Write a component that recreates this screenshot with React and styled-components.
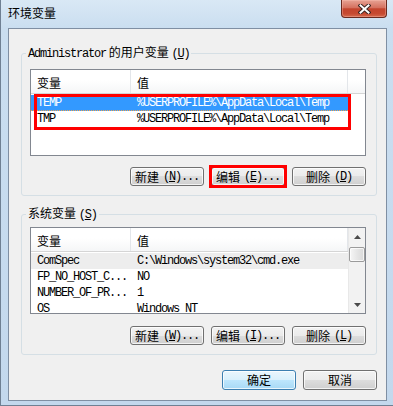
import React from "react";
import styled, { createGlobalStyle, css } from "styled-components";

const Global = createGlobalStyle`
  html, body { margin: 0; padding: 0; background: #3d7a98; }
  body { font-family: "Noto Sans CJK SC", sans-serif; font-size: 12px; }
`;

const Window = styled.div`
  width: 393px;
  height: 406px;
  box-sizing: border-box;
  display: flex;
  flex-direction: column;
  border-left: 1px solid #6f8093;
  border-bottom: 1px solid #6f8093;
  background: linear-gradient(180deg, #d9e8f5 0px, #cadef0 28px, #c3d8ed 100%);
`;

const TitleBar = styled.div`
  height: 28px;
  flex: none;
  display: flex;
  align-items: flex-start;
  padding-left: 7px;
`;

const Title = styled.div`
  margin-top: 5px;
  font-size: 12px;
  line-height: 16px;
  color: #000;
`;

const CloseBtn = styled.div`
  margin-left: auto;
  margin-right: 6px;
  width: 46px;
  height: 18px;
  box-sizing: border-box;
  border: 1px solid #6a2a1f;
  border-top: none;
  border-radius: 0 0 4px 4px;
  background: linear-gradient(#e7a394 0%, #d5715f 45%, #c3442d 52%, #c64a31 80%, #d56a4e 100%);
  box-shadow: inset 0 0 0 1px rgba(255, 200, 190, 0.35);
  display: flex;
  align-items: center;
  justify-content: center;
`;

const Client = styled.div`
  flex: 1;
  margin: 0 6px 8px 7px;
  border: 1px solid #7f8fa3;
  background: #f0f0f0;
  display: flex;
  flex-direction: column;
  padding: 15px 9px 10px 12px;
`;

const Group = styled.fieldset`
  margin: ${(p) => p.$mt || 0}px 0 0 0;
  padding: ${(p) => p.$pt}px 10px 9px 8px;
  border: 1px solid #d5dfe5;
  border-radius: 3px;
  min-width: 0;
`;

const Legend = styled.legend`
  padding: 0 2px;
  margin-left: -4px;
  line-height: 16px;
  font-size: 12px;
  color: #000;
`;

const Latin = styled.span`
  font-family: "Liberation Mono", "DejaVu Sans Mono", monospace;
  font-size: 12px;
  letter-spacing: -1.2px;
`;

const Key = styled.span`
  text-decoration: underline;
  text-underline-offset: 1px;
`;

const List = styled.div`
  position: relative;
  height: 87px;
  box-sizing: border-box;
  border: 1px solid #828790;
  background: #fff;
  display: flex;
  overflow: hidden;
`;

const Table = styled.div`
  width: ${(p) => (p.$full ? "100%" : "317px")};
  flex: none;
  display: flex;
  flex-direction: column;
`;

const Header = styled.div`
  height: 24px;
  flex: none;
  box-sizing: border-box;
  display: grid;
  grid-template-columns: ${(p) => (p.$full ? "100px 217px 1fr" : "100px 1fr")};
  border-bottom: 1px solid #d5d5d5;
  background: linear-gradient(#ffffff 0%, #ffffff 45%, #f5f6f7 100%);
`;

const HeadCell = styled.div`
  display: flex;
  align-items: center;
  padding: 2px 0 0 6px;
  border-right: ${(p) => (p.$last ? "none" : "1px solid #e3e6ea")};
  font-size: 12px;
  color: #000;
`;

const Rows = styled.div`
  padding-top: 1px;
  display: flex;
  flex-direction: column;
`;

const Row = styled.div`
  width: 317px;
  height: 16px;
  box-sizing: border-box;
  display: grid;
  grid-template-columns: 100px 217px;
  align-items: center;
  color: #000;
  ${(p) =>
    p.$state === "selected" &&
    css`
      background: #3399ff;
      color: #fff;
      border-bottom: 1px dotted #f2a24a;
    `}
  ${(p) =>
    p.$state === "inactive" &&
    css`
      background: #ededed;
    `}
`;

const Cell = styled(Latin)`
  padding-left: 6px;
  white-space: nowrap;
  overflow: hidden;
  line-height: 16px;
`;

const Mark = styled.div`
  position: absolute;
  left: 3px;
  top: 24px;
  width: 317px;
  height: 36px;
  box-sizing: border-box;
  border: 3px solid #ff0000;
  pointer-events: none;
`;

const Scrollbar = styled.div`
  width: 17px;
  flex: none;
  display: flex;
  flex-direction: column;
  background: #f2f2f2;
  border-left: 1px solid #e8e8e8;
  box-sizing: border-box;
`;

const Arrow = styled.div`
  height: 17px;
  flex: none;
  display: flex;
  align-items: center;
  justify-content: center;
`;

const Thumb = styled.div`
  margin: 2px 0 0 0;
  height: 15px;
  box-sizing: border-box;
  border: 1px solid #9b9b9b;
  border-radius: 2px;
  background: linear-gradient(90deg, #f6f6f6, #e6e6e6 50%, #d9d9d9);
  box-shadow: inset 0 0 0 1px rgba(255, 255, 255, 0.7);
`;

const Spacer = styled.div`
  flex: 1;
`;

const ButtonRow = styled.div`
  display: flex;
  justify-content: flex-end;
  gap: 7px;
  margin-top: ${(p) => p.$mt || 0}px;
`;

const Btn = styled.div`
  position: relative;
  width: 74px;
  height: ${(p) => p.$h || 19}px;
  box-sizing: border-box;
  border: 1px solid ${(p) => (p.$primary ? "#3c7fb1" : "#707070")};
  border-radius: 3px;
  background: ${(p) =>
    p.$primary
      ? "linear-gradient(#eaf6fd, #d9f0fc 50%, #bee6fd 50%, #a7d9f5)"
      : "linear-gradient(#f2f2f2, #ebebeb 50%, #dddddd 50%, #cfcfcf)"};
  box-shadow: inset 0 0 0 1px rgba(255, 255, 255, 0.75);
  display: flex;
  align-items: center;
  justify-content: center;
  white-space: pre;
  font-size: 12px;
  line-height: 1;
  color: #000;
  ${(p) =>
    p.$marked &&
    css`
      &::after {
        content: "";
        position: absolute;
        left: -3px;
        top: -3px;
        right: -3px;
        bottom: -3px;
        border: 3px solid #ff0000;
      }
    `}
`;

const Gap = styled.span`
  display: inline-block;
  width: ${(p) => p.$w || 4}px;
`;

const Accel = ({ k, dots }) => (
  <Latin>
    (<Key>{k}</Key>){dots ? "..." : ""}
  </Latin>
);

const Tri = ({ down }) => (
  <svg width="7" height="4" viewBox="0 0 7 4">
    <polygon points={down ? "0,0 7,0 3.5,4" : "0,4 7,4 3.5,0"} fill="#4a4a4a" />
  </svg>
);

const userVars = [
  { name: "TEMP", value: "%USERPROFILE%\\AppData\\Local\\Temp", state: "selected" },
  { name: "TMP", value: "%USERPROFILE%\\AppData\\Local\\Temp" },
];

const sysVars = [
  { name: "ComSpec", value: "C:\\Windows\\system32\\cmd.exe", state: "inactive" },
  { name: "FP_NO_HOST_C...", value: "NO" },
  { name: "NUMBER_OF_PR...", value: "1" },
  { name: "OS", value: "Windows_NT" },
];

export default function App() {
  return (
    <>
      <Global />
      <Window>
        <TitleBar>
          <Title>环境变量</Title>
          <CloseBtn>
            <svg width="13" height="10" viewBox="0 0 13 10">
              <path d="M2.5 1.5 L10.5 8.5 M10.5 1.5 L2.5 8.5" stroke="#3a2522" strokeWidth="4" strokeLinecap="square" />
              <path d="M2.5 1.5 L10.5 8.5 M10.5 1.5 L2.5 8.5" stroke="#ffffff" strokeWidth="2" strokeLinecap="square" />
            </svg>
          </CloseBtn>
        </TitleBar>
        <Client>
          <Group $pt={7}>
            <Legend>
              <Latin>Administrator</Latin> 的用户变量 <Accel k="U" />
            </Legend>
            <List>
              <Table $full>
                <Header $full>
                  <HeadCell>变量</HeadCell>
                  <HeadCell>值</HeadCell>
                  <HeadCell $last />
                </Header>
                <Rows>
                  {userVars.map((v) => (
                    <Row key={v.name} $state={v.state}>
                      <Cell>{v.name}</Cell>
                      <Cell>{v.value}</Cell>
                    </Row>
                  ))}
                </Rows>
              </Table>
              <Mark />
            </List>
            <ButtonRow $mt={11}>
              <Btn>
                新建<Gap /><Accel k="N" dots />
              </Btn>
              <Btn $marked>
                编辑<Gap /><Accel k="E" dots />
              </Btn>
              <Btn>
                删除<Gap /><Accel k="D" />
              </Btn>
            </ButtonRow>
          </Group>
          <Group $mt={9} $pt={4}>
            <Legend>
              系统变量 <Accel k="S" />
            </Legend>
            <List>
              <Table>
                <Header>
                  <HeadCell>变量</HeadCell>
                  <HeadCell>值</HeadCell>
                </Header>
                <Rows>
                  {sysVars.map((v) => (
                    <Row key={v.name} $state={v.state}>
                      <Cell>{v.name}</Cell>
                      <Cell>{v.value}</Cell>
                    </Row>
                  ))}
                </Rows>
              </Table>
              <Scrollbar>
                <Arrow>
                  <Tri />
                </Arrow>
                <Thumb />
                <Spacer />
                <Arrow>
                  <Tri down />
                </Arrow>
              </Scrollbar>
            </List>
            <ButtonRow $mt={12}>
              <Btn>
                新建<Gap /><Accel k="W" dots />
              </Btn>
              <Btn>
                编辑<Gap /><Accel k="I" dots />
              </Btn>
              <Btn>
                删除<Gap /><Accel k="L" />
              </Btn>
            </ButtonRow>
          </Group>
          <ButtonRow $mt={15}>
            <Btn $primary $h={20}>确定</Btn>
            <Btn $h={20}>取消</Btn>
          </ButtonRow>
        </Client>
      </Window>
    </>
  );
}
